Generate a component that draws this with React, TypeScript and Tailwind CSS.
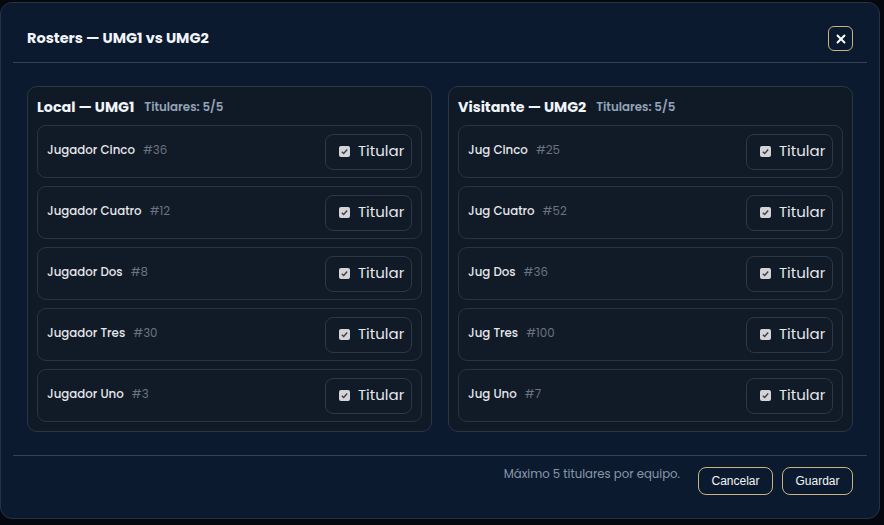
import { X } from "lucide-react";

type Player = { name: string; num: number };

const local: Player[] = [
  { name: "Jugador Cinco", num: 36 },
  { name: "Jugador Cuatro", num: 12 },
  { name: "Jugador Dos", num: 8 },
  { name: "Jugador Tres", num: 30 },
  { name: "Jugador Uno", num: 3 },
];

const visit: Player[] = [
  { name: "Jug Cinco", num: 25 },
  { name: "Jug Cuatro", num: 52 },
  { name: "Jug Dos", num: 36 },
  { name: "Jug Tres", num: 100 },
  { name: "Jug Uno", num: 7 },
];

const CheckBox = () => (
  <span className="flex h-[11px] w-[11px] items-center justify-center rounded-[2px] bg-[#d4d4d8]">
    <svg viewBox="0 0 10 10" className="h-[9px] w-[9px]">
      <path d="M2 5.2 L4.1 7.2 L8 2.8" fill="none" stroke="#3f3f46" strokeWidth="1.6" />
    </svg>
  </span>
);

const PlayerRow = ({ player }: { player: Player }) => (
  <div className="flex h-[53px] items-center justify-between rounded-[9px] border border-[#2a333f] bg-[#111a27] pl-[9px] pr-[9px]">
    <div className="flex items-center gap-[8px] pb-[1px] text-[11.8px]">
      <span className="font-medium text-[#e5e7eb]">{player.name}</span>
      <span className="text-[#6b7280]">#{player.num}</span>
    </div>
    <button className="flex h-[36px] w-[87px] items-center gap-[8px] rounded-[8px] border border-[#2e3744] pb-[1px] pl-[13px] text-[15px] text-[#e5e7eb]">
      <CheckBox />
      <span>Titular</span>
    </button>
  </div>
);

const TeamPanel = ({ title, players }: { title: string; players: Player[] }) => (
  <div className="flex-1 rounded-[10px] border border-[#2c3542] bg-[#101a27] px-[9px] pb-[9px]">
    <div className="flex h-[38px] items-center gap-[10px] pt-[4px]">
      <span className="text-[14.3px] font-bold text-[#f1f5f9]">{title}</span>
      <span className="text-[11.8px] font-semibold text-[#94a3b8]">Titulares: 5/5</span>
    </div>
    <div className="flex flex-col gap-[8px]">
      {players.map((p) => (
        <PlayerRow key={p.name} player={p} />
      ))}
    </div>
  </div>
);

export default function App() {
  return (
    <div
      className="flex h-[525px] w-[884px] overflow-hidden bg-[#05080f] pt-[2px]"
      style={{ fontFamily: "Poppins, Inter, 'Noto Sans', sans-serif" }}
    >
      <div className="flex h-[517px] w-[880px] flex-col rounded-[12px] border border-[#273142] bg-[#0c1a2f] px-[12px]">
        <div className="flex h-[60px] items-center justify-between border-b border-[#374151] pl-[14px] pr-[14px] pt-[12px]">
          <h2 className="text-[14.5px] font-bold text-[#f1f5f9]">Rosters — UMG1 vs UMG2</h2>
          <button className="flex h-[25px] w-[25px] items-center justify-center rounded-[6px] border border-[#c9b37e] text-white">
            <X size={14} strokeWidth={3.2} />
          </button>
        </div>
        <div className="flex gap-[16px] px-[14px] pt-[23px]">
          <TeamPanel title="Local — UMG1" players={local} />
          <TeamPanel title="Visitante — UMG2" players={visit} />
        </div>
        <div className="mt-[23px] flex h-[51px] items-center justify-end gap-[9px] border-t border-[#374151] pr-[14px]">
          <span className="mr-[9px] mb-[12px] text-[11.7px] text-[#8b97a8]">Máximo 5 titulares por equipo.</span>
          <button
            className="h-[28px] w-[75px] rounded-[8px] border border-[#c9b37e] text-[12px] text-[#f1f5f9]"
            style={{ fontFamily: "'Liberation Sans', Arial, sans-serif" }}
          >
            Cancelar
          </button>
          <button
            className="h-[28px] w-[71px] rounded-[8px] border border-[#c9b37e] text-[12px] text-[#f1f5f9]"
            style={{ fontFamily: "'Liberation Sans', Arial, sans-serif" }}
          >
            Guardar
          </button>
        </div>
      </div>
    </div>
  );
}
